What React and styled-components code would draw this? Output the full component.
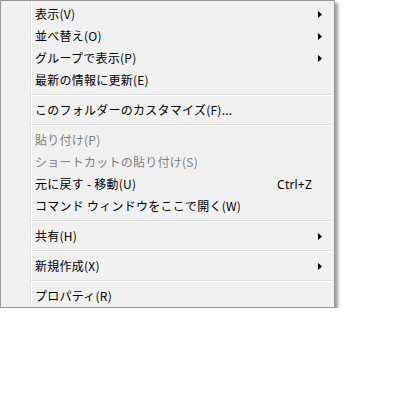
import React from 'react';
import styled, { createGlobalStyle } from 'styled-components';

const GlobalStyle = createGlobalStyle`
  html, body {
    margin: 0;
    padding: 0;
    background: #ffffff;
  }
  body {
    font-family: "Noto Sans CJK JP", "Noto Sans", sans-serif;
    font-size: 12px;
  }
`;

const Menu = styled.div`
  width: 333px;
  padding: 2px 0 0 0;
  border: 1px solid #979797;
  background: linear-gradient(
    to right,
    #f0f0f0 0 29px,
    #e2e3e3 29px 30px,
    #ffffff 30px 31px,
    #f0f0f0 31px
  );
  box-shadow: 3px 3px 3px rgba(0, 0, 0, 0.38);
  display: flex;
  flex-direction: column;
`;

const Item = styled.div`
  height: 22px;
  display: grid;
  grid-template-columns: 34px 1fr auto 22px;
  align-items: center;
  color: ${(p) => (p.disabled ? '#808080' : '#000000')};
  white-space: nowrap;
`;

const Label = styled.span`
  grid-column: 2;
  line-height: 22px;
  letter-spacing: 0.25px;
`;

const Shortcut = styled.span`
  grid-column: 3;
  font-family: "Noto Sans", sans-serif;
  letter-spacing: 0.2px;
`;

const Arrow = styled.span`
  grid-column: 4;
  display: flex;
  align-items: center;
  padding-left: 6px;
`;

const Separator = styled.div`
  height: 8px;
  display: flex;
  flex-direction: column;
  justify-content: center;
  padding: 0 1px 0 30px;

  &::before {
    content: '';
    height: 1px;
    background: #e0e0e0;
  }
  &::after {
    content: '';
    height: 1px;
    background: #ffffff;
  }
`;

const SubArrow = () => (
  <svg width="4" height="7" viewBox="0 0 4 7">
    <path d="M0 0 L4 3.5 L0 7 Z" fill="#000" />
  </svg>
);

const groups = [
  [
    { label: '表示(V)', sub: true },
    { label: '並べ替え(O)', sub: true },
    { label: 'グループで表示(P)', sub: true },
    { label: '最新の情報に更新(E)' },
  ],
  [{ label: 'このフォルダーのカスタマイズ(F)...' }],
  [
    { label: '貼り付け(P)', disabled: true },
    { label: 'ショートカットの貼り付け(S)', disabled: true },
    { label: '元に戻す - 移動(U)', shortcut: 'Ctrl+Z' },
    { label: 'コマンド ウィンドウをここで開く(W)' },
  ],
  [{ label: '共有(H)', sub: true }],
  [{ label: '新規作成(X)', sub: true }],
  [{ label: 'プロパティ(R)' }],
];

const App = () => (
  <>
    <GlobalStyle />
    <Menu>
      {groups.map((group, gi) => (
        <React.Fragment key={gi}>
          {gi > 0 && <Separator />}
          {group.map((item) => (
            <Item key={item.label} disabled={item.disabled}>
              <Label>{item.label}</Label>
              {item.shortcut && <Shortcut>{item.shortcut}</Shortcut>}
              {item.sub && (
                <Arrow>
                  <SubArrow />
                </Arrow>
              )}
            </Item>
          ))}
        </React.Fragment>
      ))}
    </Menu>
  </>
);

export default App;
